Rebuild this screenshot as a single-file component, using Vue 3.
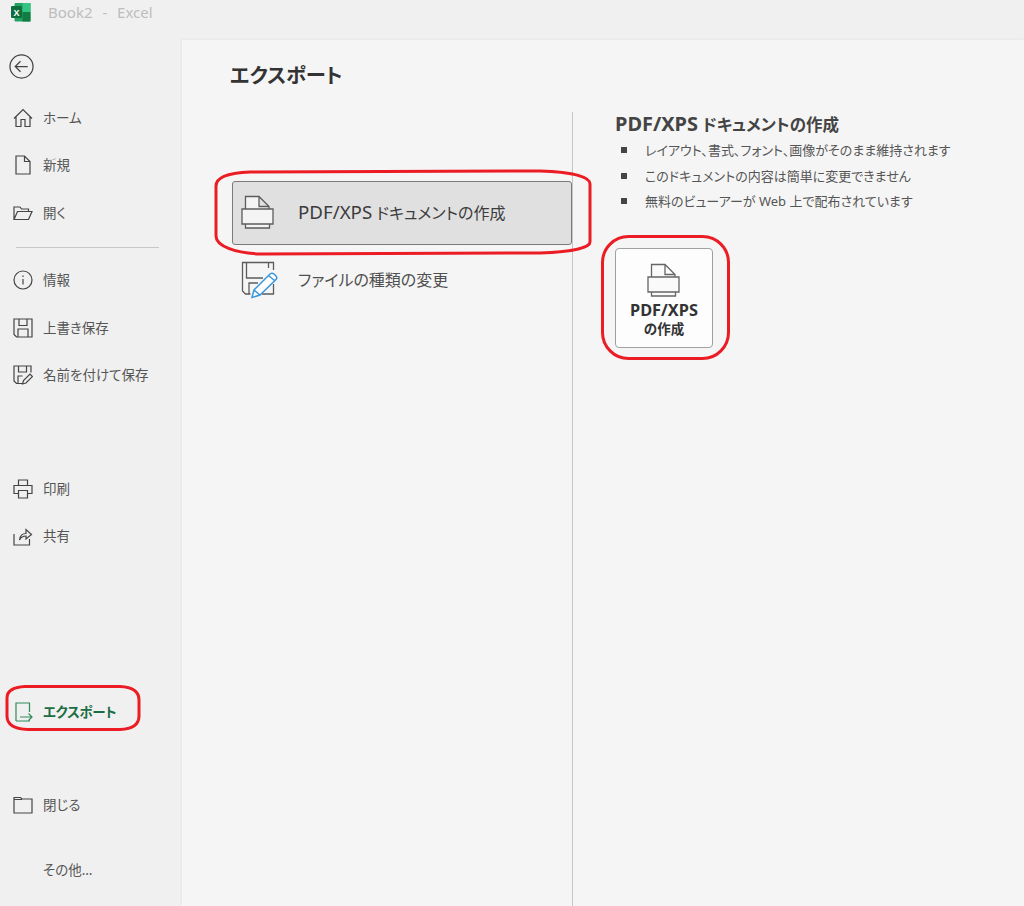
<script setup>
const topItems = [
  { label: 'ホーム', icon: 'home' },
  { label: '新規', icon: 'new' },
  { label: '開く', icon: 'open' },
]
const midItems = [
  { label: '情報', icon: 'info' },
  { label: '上書き保存', icon: 'save' },
  { label: '名前を付けて保存', icon: 'saveas' },
]
const lowItems = [
  { label: '印刷', icon: 'print' },
  { label: '共有', icon: 'share' },
]
const bullets = [
  'レイアウト、書式、フォント、画像がそのまま維持されます',
  'このドキュメントの内容は簡単に変更できません',
  '無料のビューアーが Web 上で配布されています',
]
const paths = {
  home: 'M1 10.500 10 1.500l9 9M3 8.500v10h5v-7h4v7h5v-10',
  new: 'M3 1h8.500L17 6.500V19H3zM11.500 1v5.500H17',
  open: 'M1 16.500V4h6l1.500 2h7v2.500M1 16.500h14.500L19 8.500H4.500z',
  info: 'M10 9v5.500M10 5.500v1.600',
  save: 'M1 1h18v18H3.500L1 16.500zM6 1v6.500h8V1M5 19v-8h10v8',
  saveas: 'M9 18.500H3.500L1 16V1h17v6.500M5.500 1v6h8V1M5 18.500V11h4.500M9.500 19l1-3.500L17 9l2.500 2.500-6.500 6.500z',
  print: 'M5.500 6.500V1h9v5.500M5.500 14.500H1v-8h18v8h-4.500M5.500 11.500h9V19h-9z',
  share: 'M1 8v11h15.500v-6M6.500 14c.5-4.500 3-6.500 6.500-6.500V3.500l5.500 5-5.500 4.500v-3c-2.500 0-5 1-6.500 4z',
}
</script>

<template>
  <div class="window">
    <header class="titlebar">
      <svg class="logo" viewBox="0 0 20 20" aria-hidden="true">
        <rect x="3.500" y="1" width="16" height="18.500" rx="1" fill="#21a366" />
        <rect x="11.500" y="1" width="8" height="9" fill="#33c481" />
        <rect x="11.500" y="10" width="8" height="9.500" fill="#107c41" />
        <rect x="0" y="4" width="11" height="12" rx="1" fill="#0f6e3b" />
        <text x="5.500" y="13.500" text-anchor="middle" class="logo-x">X</text>
      </svg>
      <span class="doc">Book2 - Excel</span>
    </header>

    <div class="body">
      <nav class="side">
        <svg class="back" viewBox="0 0 26 26" aria-hidden="true">
          <circle cx="13" cy="13" r="12" />
          <path d="M6.500 13h13M12 7.500 6.500 13l5.500 5.500" />
        </svg>

        <div class="group g1">
          <div v-for="i in topItems" :key="i.label" class="item">
            <svg class="ico" viewBox="0 0 20 20" aria-hidden="true"><path :d="paths[i.icon]" /></svg>
            <span>{{ i.label }}</span>
          </div>
        </div>
        <div class="divider"></div>
        <div class="group">
          <div v-for="i in midItems" :key="i.label" class="item">
            <svg class="ico" viewBox="0 0 20 20" aria-hidden="true">
              <circle v-if="i.icon === 'info'" cx="10" cy="10" r="9" />
              <path :d="paths[i.icon]" />
            </svg>
            <span>{{ i.label }}</span>
          </div>
        </div>
        <div class="group g3">
          <div v-for="i in lowItems" :key="i.label" class="item">
            <svg class="ico" viewBox="0 0 20 20" aria-hidden="true"><path :d="paths[i.icon]" /></svg>
            <span>{{ i.label }}</span>
          </div>
        </div>
        <div class="item active g4">
          <svg class="ico" viewBox="0 0 20 20" aria-hidden="true">
            <path d="M3 19V1h13.500v9M3 19h14M7 15h12M15.500 11.500 19 15l-3.500 3.500" />
          </svg>
          <span>エクスポート</span>
        </div>
        <div class="item g5">
          <svg class="ico" viewBox="0 0 20 20" aria-hidden="true">
            <path d="M1 2.500h6.500l1.500 1.500h10v14H1zM1 4.500h8" />
          </svg>
          <span>閉じる</span>
        </div>
        <div class="item g6"><span class="noicon">その他…</span></div>
      </nav>

      <main class="main">
        <h1 class="title">エクスポート</h1>
        <div class="columns">
          <section class="options">
            <div class="option selected">
              <svg class="opt-ico" viewBox="0 0 34 34" aria-hidden="true">
                <path d="M4.500 14V1.500H18L28 11.500V14M18 1.500v10h10" />
                <path d="M1 14h31v15H1zM4.500 29v4h24v-4" />
              </svg>
              <span><span class="lat">PDF/XPS</span> ドキュメントの作成</span>
            </div>
            <div class="option second">
              <svg class="opt-ico" viewBox="0 0 36 36" aria-hidden="true">
                <path d="M9.500 32H4.500L1.500 29V.5h31V8M5.500.5V16H22M27.500.5V6M8 32V21h9M32.500 22v10H21" />
                <path class="pen" d="M11 35.500 13 28 29 12q2-1.500 4 0l2 2q1.500 2 0 3.500L19 33zM13 28l6 5M27.500 13.500l6 5" />
              </svg>
              <span>ファイルの種類の変更</span>
            </div>
          </section>
          <section class="detail">
            <h2 class="detail-title"><span class="lat wide">PDF/XPS</span> ドキュメントの作成</h2>
            <ul class="list">
              <li v-for="b in bullets" :key="b"><i class="sq"></i><span>{{ b }}</span></li>
            </ul>
            <button class="create" type="button">
              <svg class="create-ico" viewBox="0 0 34 34" aria-hidden="true">
                <path d="M4.500 14V1.500H18L28 11.500V14M18 1.500v10h10" />
                <path d="M1 14h31v15H1zM4.500 29v4h24v-4" />
              </svg>
              <span><span class="lat wide">PDF/XPS</span><br />の作成</span>
            </button>
          </section>
        </div>
      </main>
    </div>

    <svg class="marks" viewBox="0 0 1024 906" aria-hidden="true">
      <path d="M216 186C216 178 226 173 250 172L540 171C570 172 590 176 590 184V242C590 248 570 252 540 253L260 254C235 253 216 246 216 236Z" />
      <rect x="602.500" y="236.500" width="126" height="122" rx="26" />
      <path d="M7 698C7 690 14 687 25 686.500H120C133 687 139 692 139 700V716C139 725 132 729 120 729.500H28C14 729 7 725 7 716Z" />
    </svg>
  </div>
</template>

<style>
html, body { margin: 0; background: #f0f0f0; }
</style>

<style scoped>
.window {
  position: relative;
  width: 1024px;
  height: 906px;
  overflow: hidden;
  background: #f0f0f0;
  color: #444;
  font-family: "Noto Sans", "Noto Sans CJK JP", sans-serif;
  font-feature-settings: "palt";
}
.lat { font-size: 1.17em; }
.lat.wide { font-size: 1.21em; }
.titlebar {
  height: 40px;
  display: flex;
  align-items: flex-start;
  padding: 2px 0 0 11px;
  box-sizing: border-box;
}
.logo { width: 20px; height: 20px; }
.logo-x { font: 700 9px "Liberation Sans", sans-serif; fill: #fff; }
.doc {
  margin-left: 17px;
  font-size: 15px;
  line-height: 21px;
  word-spacing: 6px;
  color: #bdbdbd;
}
.body { display: flex; height: 866px; }
.side {
  width: 182px;
  flex: none;
  display: flex;
  flex-direction: column;
  padding-left: 10px;
  box-sizing: border-box;
}
.back {
  width: 25px;
  height: 25px;
  margin: 14px 0 0 -1px;
  fill: none;
  stroke: #444;
  stroke-width: 1.300;
}
.group { display: flex; flex-direction: column; }
.g1 { margin-top: 15px; }
.item {
  height: 47.500px;
  flex: none;
  display: flex;
  align-items: center;
  gap: 10px;
  font-size: 13.500px;
  color: #555;
}
.item > span { padding-bottom: 2px; }
.ico {
  width: 20px;
  height: 20px;
  margin-left: 3px;
  flex: none;
  fill: none;
  stroke: #444;
  stroke-width: 1.200;
}
.divider {
  width: 143px;
  height: 1px;
  margin: 10px 0 9px 6px;
  background: #c8c8c8;
}
.g3 { margin-top: 66px; }
.active { margin-top: 128px; color: #1b6e44; font-weight: 700; letter-spacing: -.3px; }
.active .ico { stroke: #2f8a5c; }
.g5 { margin-top: 46px; }
.g6 { margin-top: 17px; }
.noicon { margin-left: 33px; }
.main {
  flex: 1;
  background: #f5f5f5;
  box-shadow: -1px -1px 2px rgba(0, 0, 0, .04);
  padding-top: 20px;
  min-width: 0;
}
.title {
  margin: 0 0 0 48px;
  font-size: 20.300px;
  line-height: 30px;
  font-weight: 700;
  color: #333;
}
.columns { display: flex; margin-top: 22px; height: 794px; }
.options {
  width: 391px;
  flex: none;
  box-sizing: border-box;
  padding: 69px 0 0 50px;
  border-right: 1px solid #c6c6c6;
  display: flex;
  flex-direction: column;
}
.option {
  width: 340px;
  height: 64px;
  box-sizing: border-box;
  display: flex;
  align-items: center;
  gap: 23px;
  padding-left: 8px;
  font-size: 16px;
  color: #505050;
  flex: none;
}
.option > span { padding-bottom: 3px; }
.selected {
  background: #e0e0e0;
  border: 1px solid #7b7b7b;
  border-radius: 3px;
  color: #3c3c3c;
}
.opt-ico {
  width: 34px;
  height: 34px;
  margin-bottom: 2px;
  flex: none;
  fill: none;
  stroke: #5c5c5c;
  stroke-width: 1.300;
}
.selected .opt-ico { fill: #f4f4f4; }
.second { margin-top: 3px; padding-left: 9px; gap: 21px; }
.second .opt-ico { width: 36px; height: 36px; margin-bottom: 0; overflow: visible; }
.pen { fill: #fff; stroke: #3a96dd; stroke-width: 1.500; }
.detail { padding: 0 0 0 42px; min-width: 0; }
.detail-title {
  margin: 0;
  font-size: 16.500px;
  line-height: 24px;
  font-weight: 700;
  color: #444;
}
.list {
  list-style: none;
  margin: 0;
  padding: 0;
}
.list li {
  height: 25.700px;
  display: flex;
  align-items: center;
  white-space: pre;
  font-size: 13px;
  color: #555;
}
.list li > span { padding-bottom: 1px; }
.sq {
  width: 6px;
  height: 6px;
  margin: 0 18px 0 6px;
  background: #444;
  flex: none;
}
.create {
  margin-top: 34px;
  width: 98px;
  height: 100px;
  box-sizing: border-box;
  padding: 14px 0 0;
  background: #fdfdfd;
  border: 1px solid #a0a0a0;
  border-radius: 4px;
  display: flex;
  flex-direction: column;
  align-items: center;
  font: inherit;
  font-size: 13.500px;
  font-weight: 700;
  line-height: 18px;
  color: #333;
}
.create-ico {
  width: 34px;
  height: 34px;
  margin-bottom: 4px;
  fill: #fafafa;
  stroke: #666;
  stroke-width: 1.300;
}
.marks {
  position: absolute;
  inset: 0;
  width: 1024px;
  height: 906px;
  fill: none;
  stroke: #ec1c24;
  stroke-width: 3;
  pointer-events: none;
}
</style>
